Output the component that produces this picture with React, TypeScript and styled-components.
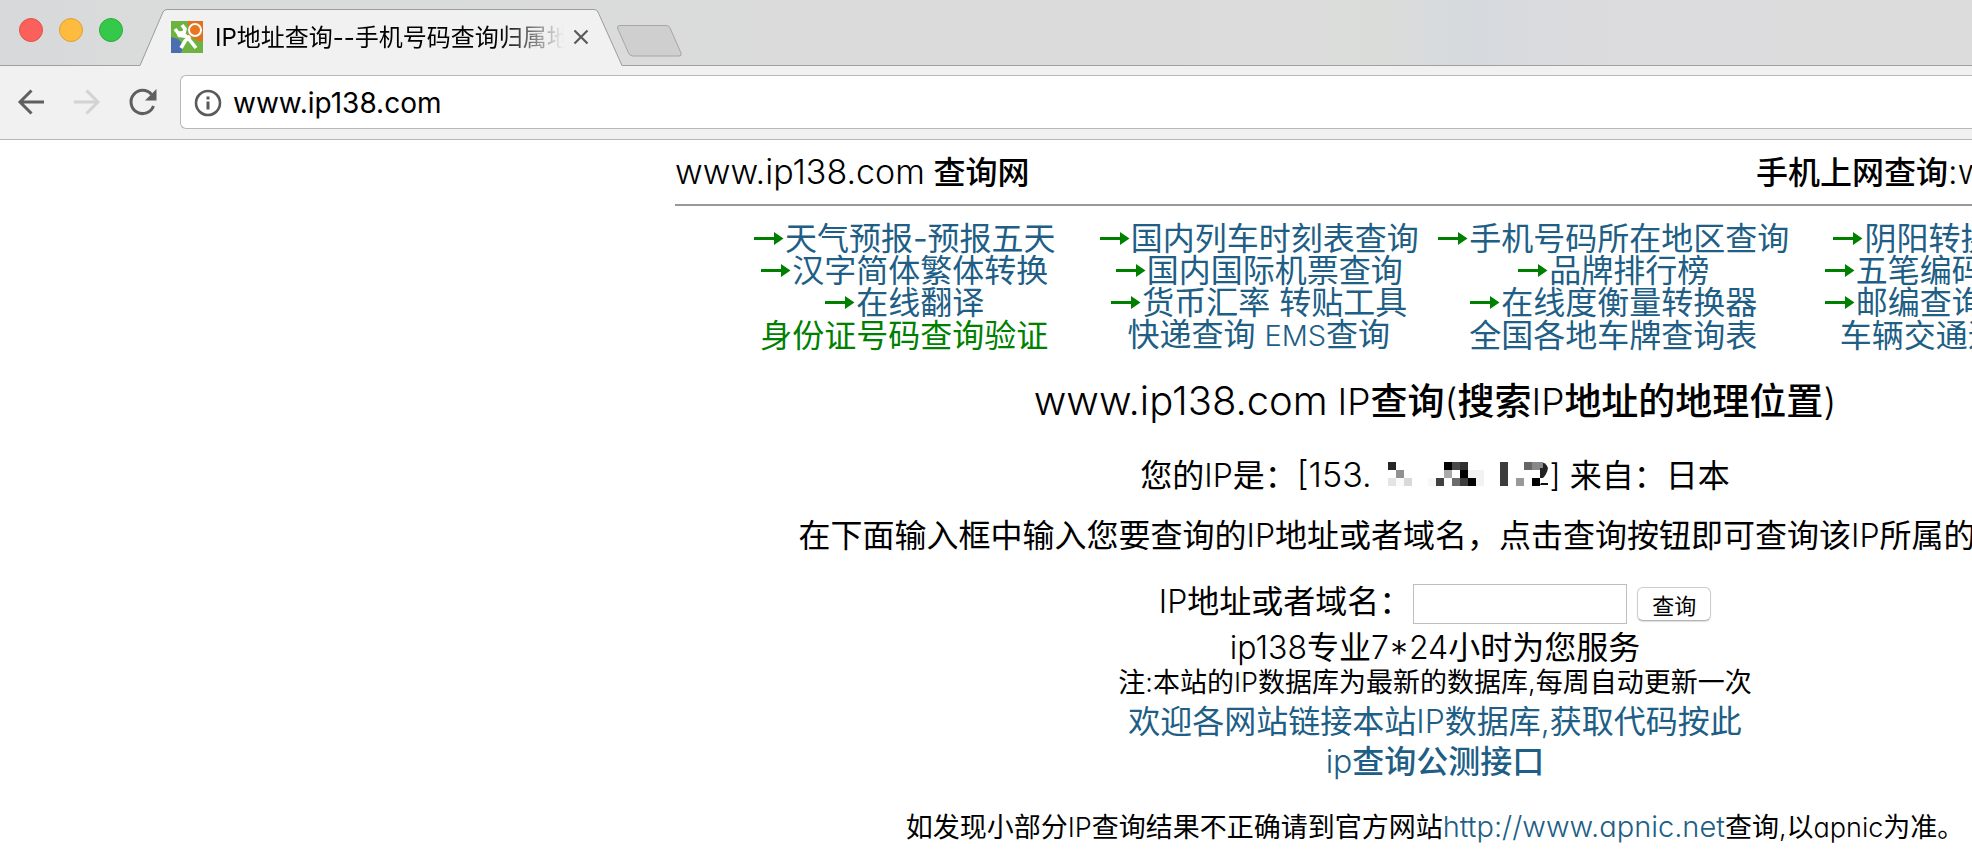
import React from "react";
import styled, { createGlobalStyle } from "styled-components";

const LINK = "#205e85";
const GREEN = "#008000";

const GlobalStyle = createGlobalStyle`
  *, *::before, *::after { box-sizing: border-box; }
  body {
    margin: 0;
    background: #fff;
    color: #000;
    overflow: hidden;
    font-family: Inter, "Noto Sans CJK SC", sans-serif;
  }
  h1, p, ul { margin: 0; padding: 0; font: inherit; }
`;

/* ---------- browser chrome ---------- */

const TabStrip = styled.header`
  display: flex;
  height: 66px;
  border-bottom: 1px solid #a0a0a0;
  background: linear-gradient(90deg, #d7d8da 0%, #dadbdb 6%, #dbdbdb 60%, #dadcda 70%, #d6dade 75%, #dbdbde 80%, #dcdcdc 100%);
`;

const WindowButtons = styled.div`
  display: flex;
  gap: 16px;
  padding: 18px 17px 0 19px;
`;

const WindowButton = styled.button<{ $fill: string; $edge: string }>`
  width: 24px;
  height: 24px;
  padding: 0;
  border: 1px solid ${(p) => p.$edge};
  border-radius: 50%;
  background: ${(p) => p.$fill};
`;

const Tab = styled.div`
  display: grid;
  grid-template-columns: 100%;
  width: 482px;
  height: 66px;
  > * { grid-area: 1 / 1; }
`;

const TabContent = styled.div`
  display: flex;
  align-items: center;
  z-index: 1;
  padding: 12px 33px 4px 31px;
`;

const TabTitle = styled.span`
  flex: 1;
  margin: 0 9px 0 12px;
  padding-top: 2px;
  overflow: hidden;
  white-space: nowrap;
  font-size: 24px;
  line-height: 32px;
  mask-image: linear-gradient(90deg, #000 82%, transparent 100%);
`;

const IconButton = styled.button`
  display: flex;
  padding: 0;
  border: 0;
  background: none;
`;

const NewTab = styled(IconButton)`
  margin: 24px 0 0 -6px;
  align-self: flex-start;
`;

const Toolbar = styled.nav`
  display: flex;
  align-items: center;
  height: 74px;
  padding: 0 0 2px 16px;
  border-bottom: 1px solid #b6b6b6;
  background: #f1f1f1;
`;

const NavButtons = styled.div`
  display: flex;
  gap: 26px;
  width: 164px;
`;

const Omnibox = styled.label`
  display: flex;
  flex: 1;
  align-items: center;
  gap: 11px;
  height: 54px;
  padding: 2px 0 0 13px;
  border: 1px solid #b8b8b8;
  border-right: 0;
  border-radius: 6px 0 0 6px;
  background: #fff;
`;

const AddressInput = styled.input`
  flex: 1;
  padding: 0;
  border: 0;
  outline: 0;
  background: none;
  color: #000;
  font: 400 28px/36px Inter, sans-serif;
`;

/* ---------- page ---------- */

const Page = styled.main`
  margin-left: 675px;
  width: 1520px;
  font-size: 32px;
  line-height: 32px;
  text-align: center;
`;

const Latin = styled.span<{ $size?: number }>`
  font-size: ${(p) => (p.$size ? `${p.$size}px` : "inherit")};
  font-weight: 300;
  font-feature-settings: "cv11";
`;

const SiteBar = styled.div`
  display: flex;
  align-items: center;
  justify-content: space-between;
  height: 66px;
  border-bottom: 2px solid #999;
  font-weight: 500;
`;

const LinkGrid = styled.ul`
  display: grid;
  grid-template-columns: repeat(4, 1fr);
  padding: 17px 50px 0 52px;
  list-style: none;
`;

const LinkItem = styled.li`
  display: flex;
  align-items: center;
  justify-content: center;
`;

const Anchor = styled.a<{ $color?: string; $strong?: boolean }>`
  color: ${(p) => p.$color ?? LINK};
  font-weight: ${(p) => (p.$strong ? 500 : 400)};
  text-decoration: none;
  white-space: nowrap;
`;

const Heading = styled.h1`
  padding: 25px 0 20px;
  font-size: 37px;
  font-weight: 500;
  line-height: 48px;
`;

const Line = styled.p<{ $height: number; $small?: boolean }>`
  font-size: ${(p) => (p.$small ? 27 : 32)}px;
  line-height: ${(p) => p.$height}px;
  white-space: nowrap;
`;

const IpLine = styled(Line)`
  display: flex;
  align-items: center;
  justify-content: center;
`;

const Form = styled.form`
  display: flex;
  align-items: center;
  justify-content: center;
  height: 60px;
  margin-top: 5px;
`;

const QueryInput = styled.input`
  width: 214px;
  height: 40px;
  margin: 4px 10px 0 2px;
  padding: 0 6px;
  border: 1px solid #bdbdbd;
  outline: 0;
  font: 400 24px/32px Inter, sans-serif;
`;

const QueryButton = styled.button`
  height: 34px;
  margin-top: 4px;
  padding: 0 14px;
  border: 1px solid #ccc;
  border-bottom-color: #b5b5b5;
  border-radius: 6px;
  background: #fff;
  box-shadow: 0 1px 1px #ddd;
  color: #000;
  font: 400 22px/30px "Noto Sans CJK SC", sans-serif;
`;

const Footnote = styled(Line)`
  padding-top: 26px;
`;

const Favicon = () => (
  <svg width="32" height="32" viewBox="0 0 32 32" aria-hidden="true">
    <path fill="#6db33f" d="M0 0h32v32H0z" />
    <path fill="#e2711d" d="M17 0h15v20h-5l-10-6z" />
    <path fill="#4a6fb0" d="M0 16l7 2 3 3 2 6-2 5H0z" />
    <path d="M4 8l4 5 5-1 1-4-3-4M10 11l7 6 8 10M19 15l-5 5-4 7" fill="none" stroke="#fff" strokeWidth="3.600" />
    <path d="M5 11l5-1 5 4-1 3-7-1z" fill="#fff" />
    <circle cx="24" cy="9" r="6" fill="#e8761c" stroke="#fff" strokeWidth="2" />
  </svg>
);

const TabShape = () => (
  <svg width="482" height="66" viewBox="0 0 482 66" aria-hidden="true">
    <path d="M0 66L23 12Q24.500 9.500 27 9.500H454Q457 9.500 458 12L482 66Z" fill="#f1f1f1" />
    <path d="M0 65.500L23 12Q24.500 9.500 27 9.500H454Q457 9.500 458 12L482 65.500" fill="none" stroke="#9c9c9c" />
  </svg>
);

const Arrow = () => (
  <svg width="32" height="18" viewBox="0 0 32 18" role="img" aria-label="→">
    <path d="M1 7h20V2l9.500 6.500L21 15V10H1z" fill={GREEN} />
  </svg>
);

const MOSAIC: [number, number, string][] = [
  [2, 0, "#262626"], [3, 1, "#909090"], [2, 2, "#e4e4e4"], [4, 2, "#d9d9d9"], [3, 2, "#fafafa"],
  [9, 0, "#000"], [10, 0, "#4a4a4a"], [11, 0, "#303030"], [9, 1, "#aaa"], [11, 1, "#000"],
  [12, 1, "#f2f2f2"], [13, 1, "#f2f2f2"], [7, 2, "#f7f7f7"], [8, 2, "#404040"], [10, 2, "#6c6c6c"],
  [11, 2, "#3c3c3c"], [12, 2, "#000"], [13, 2, "#f2f2f2"],
  [16, 0, "#3c3c3c"], [16, 1, "#3c3c3c"], [16, 2, "#3c3c3c"],
  [19, 0, "#666"], [20, 0, "#888"], [18, 2, "#999"], [20, 2, "#000"],
];

const HiddenAddress = () => (
  <svg width="178" height="28" viewBox="0 0 178 28" role="img" aria-label="已隐藏">
    {MOSAIC.map(([x, y, fill]) => (
      <rect key={`${x}-${y}`} x={x * 8} y={y * 8} width="8" height="8" fill={fill} shapeRendering="crispEdges" />
    ))}
    <path d="M168 0q6 0 8 6-1 6-5 10h-3z" fill="#222" />
    <path d="M168 0h3v6h-3z" fill="#888" />
    <path d="M169 21h7v2h-8z" fill="#111" />
  </svg>
);

type Item = { text: React.ReactNode; arrow?: boolean; green?: boolean };

const ITEMS: Item[] = [
  { text: "天气预报-预报五天", arrow: true },
  { text: "国内列车时刻表查询", arrow: true },
  { text: "手机号码所在地区查询", arrow: true },
  { text: "阴阳转换-万年历", arrow: true },
  { text: "汉字简体繁体转换", arrow: true },
  { text: "国内国际机票查询", arrow: true },
  { text: "品牌排行榜", arrow: true },
  { text: "五笔编码拼音查询", arrow: true },
  { text: "在线翻译", arrow: true },
  { text: "货币汇率 转贴工具", arrow: true },
  { text: "在线度衡量转换器", arrow: true },
  { text: "邮编查询区号查询", arrow: true },
  { text: "身份证号码查询验证", green: true },
  { text: <>快递查询 <Latin $size={29}>EMS</Latin>查询</> },
  { text: "全国各地车牌查询表" },
  { text: "车辆交通违章查询" },
];

export default function App() {
  return (
    <>
      <GlobalStyle />
      <TabStrip>
        <WindowButtons>
          <WindowButton $fill="#fc605b" $edge="#e2504b" aria-label="关闭窗口" />
          <WindowButton $fill="#fdbc40" $edge="#e0a032" aria-label="最小化" />
          <WindowButton $fill="#34c94a" $edge="#2aac3b" aria-label="最大化" />
        </WindowButtons>
        <Tab>
          <TabShape />
          <TabContent>
            <Favicon />
            <TabTitle>IP地址查询--手机号码查询归属地</TabTitle>
            <IconButton aria-label="关闭标签页">
              <svg width="16" height="16" viewBox="0 0 16 16">
                <path d="M1.500 1.500l13 13M14.500 1.500l-13 13" stroke="#5a5a5a" strokeWidth="2.200" />
              </svg>
            </IconButton>
          </TabContent>
        </Tab>
        <NewTab aria-label="新标签页">
          <svg width="68" height="34" viewBox="0 0 68 34">
            <path d="M4 1.500H50Q53 1.500 54 4L65 29Q66 32 63 32H17Q14 32 12.500 29L1.500 4Q1 1.500 4 1.500Z" fill="#cfcfcf" stroke="#a6a6a6" />
          </svg>
        </NewTab>
      </TabStrip>
      <Toolbar>
        <NavButtons>
          <IconButton aria-label="后退">
            <svg width="30" height="30" viewBox="0 0 30 30" fill="none" stroke="#5f5f5f" strokeWidth="3">
              <path d="M28 15H4M15.500 3.500L4 15l11.500 11.500" />
            </svg>
          </IconButton>
          <IconButton aria-label="前进" disabled>
            <svg width="30" height="30" viewBox="0 0 30 30" fill="none" stroke="#d3d3d3" strokeWidth="3">
              <path d="M2 15h24M14.500 3.500L26 15 14.500 26.500" />
            </svg>
          </IconButton>
          <IconButton aria-label="重新加载">
            <svg width="30" height="30" viewBox="0 0 30 30">
              <path d="M25.500 19A11.600 11.600 0 1 1 23.500 7.500" fill="none" stroke="#5f5f5f" strokeWidth="3" />
              <path d="M28.500 2v11.500H17z" fill="#5f5f5f" />
            </svg>
          </IconButton>
        </NavButtons>
        <Omnibox>
          <svg width="28" height="28" viewBox="0 0 28 28" aria-hidden="true">
            <circle cx="14" cy="14" r="12" fill="none" stroke="#5a5a5a" strokeWidth="2.600" />
            <path d="M14 12.500v8M14 7.500v3" stroke="#5a5a5a" strokeWidth="3" />
          </svg>
          <AddressInput aria-label="地址栏" defaultValue="www.ip138.com" />
        </Omnibox>
      </Toolbar>
      <Page>
        <SiteBar>
          <span><Latin $size={34}>www.ip138.com</Latin> 查询网</span>
          <span>手机上网查询<Latin $size={34}>:wap.ip138.com</Latin></span>
        </SiteBar>
        <LinkGrid>
          {ITEMS.map((item, i) => (
            <LinkItem key={i}>
              {item.arrow && <Arrow />}
              <Anchor href="#" $color={item.green ? GREEN : LINK}>{item.text}</Anchor>
            </LinkItem>
          ))}
        </LinkGrid>
        <Heading>
          <Latin $size={40}>www.ip138.com</Latin> <Latin>IP</Latin>查询<Latin>(</Latin>搜索<Latin>IP</Latin>地址的地理位置<Latin>)</Latin>
        </Heading>
        <IpLine $height={58}>
          <span>您的<Latin>IP</Latin>是：<Latin $size={34}>[153.</Latin></span>
          <HiddenAddress />
          <span><Latin>]</Latin> 来自：日本</span>
        </IpLine>
        <Line $height={62}>
          在下面输入框中输入您要查询的<Latin>IP</Latin>地址或者域名，点击查询按钮即可查询该<Latin>IP</Latin>所属的区域。
        </Line>
        <Form onSubmit={(e) => e.preventDefault()}>
          <label htmlFor="query"><Latin>IP</Latin>地址或者域名：</label>
          <QueryInput id="query" />
          <QueryButton type="submit">查询</QueryButton>
        </Form>
        <Line $height={32}><Latin>ip138</Latin>专业<Latin>7*24</Latin>小时为您服务</Line>
        <Line $height={38} $small>注<Latin>:</Latin>本站的<Latin>IP</Latin>数据库为最新的数据库<Latin>,</Latin>每周自动更新一次</Line>
        <Line $height={40}>
          <Anchor href="#">欢迎各网站链接本站<Latin>IP</Latin>数据库<Latin>,</Latin>获取代码按此</Anchor>
        </Line>
        <Line $height={40}>
          <Anchor href="#" $strong><Latin>ip</Latin>查询公测接口</Anchor>
        </Line>
        <Footnote $height={38} $small>
          如发现小部分<Latin>IP</Latin>查询结果不正确请到官方网站
          <Anchor href="#"><Latin $size={29}>http://www.apnic.net</Latin></Anchor>
          查询<Latin>,</Latin>以<Latin>apnic</Latin>为准。
        </Footnote>
      </Page>
    </>
  );
}
